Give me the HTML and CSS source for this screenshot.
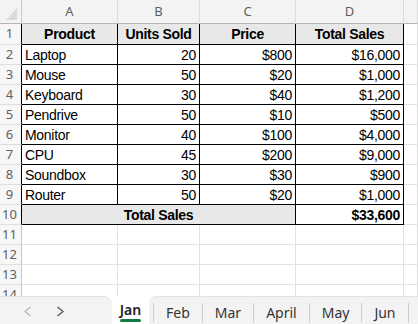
FILE: index.html
```html
<!DOCTYPE html>
<html lang="en">
<head>
  <meta charset="UTF-8" />
  <title>Sales - Jan</title>
  <link rel="stylesheet" href="styles.css">
</head>
<body>

  <div class="sheet">
    <div class="grid">
      <!-- column headers -->
      <div class="corner">
        <svg width="22" height="24" viewBox="0 0 22 24"><polygon points="6,20 17,20 17,8" fill="#dadada" /></svg>
      </div>
      <div class="col-head">A</div>
      <div class="col-head">B</div>
      <div class="col-head">C</div>
      <div class="col-head">D</div>
      <div class="col-head"></div>

      <!-- row 1 -->
      <div class="row-head in">1</div>
      <div class="cell tbl head">Product</div>
      <div class="cell tbl head">Units Sold</div>
      <div class="cell tbl head">Price</div>
      <div class="cell tbl head">Total Sales</div>
      <div class="cell"></div>

      <div class="row-head in">2</div>
      <div class="cell tbl">Laptop</div>
      <div class="cell tbl num">20</div>
      <div class="cell tbl num">$800</div>
      <div class="cell tbl num">$16,000</div>
      <div class="cell"></div>

      <div class="row-head in">3</div>
      <div class="cell tbl">Mouse</div>
      <div class="cell tbl num">50</div>
      <div class="cell tbl num">$20</div>
      <div class="cell tbl num">$1,000</div>
      <div class="cell"></div>

      <div class="row-head in">4</div>
      <div class="cell tbl">Keyboard</div>
      <div class="cell tbl num">30</div>
      <div class="cell tbl num">$40</div>
      <div class="cell tbl num">$1,200</div>
      <div class="cell"></div>

      <div class="row-head in">5</div>
      <div class="cell tbl">Pendrive</div>
      <div class="cell tbl num">50</div>
      <div class="cell tbl num">$10</div>
      <div class="cell tbl num">$500</div>
      <div class="cell"></div>

      <div class="row-head in">6</div>
      <div class="cell tbl">Monitor</div>
      <div class="cell tbl num">40</div>
      <div class="cell tbl num">$100</div>
      <div class="cell tbl num">$4,000</div>
      <div class="cell"></div>

      <div class="row-head in">7</div>
      <div class="cell tbl">CPU</div>
      <div class="cell tbl num">45</div>
      <div class="cell tbl num">$200</div>
      <div class="cell tbl num">$9,000</div>
      <div class="cell"></div>

      <div class="row-head in">8</div>
      <div class="cell tbl">Soundbox</div>
      <div class="cell tbl num">30</div>
      <div class="cell tbl num">$30</div>
      <div class="cell tbl num">$900</div>
      <div class="cell"></div>

      <div class="row-head in">9</div>
      <div class="cell tbl">Router</div>
      <div class="cell tbl num">50</div>
      <div class="cell tbl num">$20</div>
      <div class="cell tbl num">$1,000</div>
      <div class="cell"></div>

      <!-- total row, A:C merged -->
      <div class="row-head in">10</div>
      <div class="cell tbl head span3">Total Sales</div>
      <div class="cell tbl num bold">$33,600</div>
      <div class="cell"></div>

      <div class="row-head">11</div>
      <div class="cell"></div><div class="cell"></div><div class="cell"></div><div class="cell"></div><div class="cell"></div>
      <div class="row-head">12</div>
      <div class="cell"></div><div class="cell"></div><div class="cell"></div><div class="cell"></div><div class="cell"></div>
      <div class="row-head">13</div>
      <div class="cell"></div><div class="cell"></div><div class="cell"></div><div class="cell"></div><div class="cell"></div>
      <div class="row-head">14</div>
      <div class="cell"></div><div class="cell"></div><div class="cell"></div><div class="cell"></div><div class="cell"></div>
    </div>
  </div>

  <div class="tabbar">
    <div class="nav">
      <svg width="112" height="27" viewBox="0 0 112 27">
        <polyline points="30.5,10 25,14.5 30.5,19" fill="none" stroke="#b4b4b4" stroke-width="1.2" />
        <polyline points="57.5,10 63,14.5 57.5,19" fill="none" stroke="#505050" stroke-width="1.2" />
      </svg>
    </div>
    <div class="tab-active">
      <span>Jan</span>
      <i class="mark"></i>
    </div>
    <div class="tabs">
      <div class="tab">Feb</div>
      <div class="tab">Mar</div>
      <div class="tab">April</div>
      <div class="tab">May</div>
      <div class="tab">Jun</div>
    </div>
  </div>

</body>
</html>
```

FILE: styles.css
```css
body {
  margin: 0;
  width: 418px;
  height: 324px;
  overflow: hidden;
  background: #fff;
  font-family: "Liberation Sans", Arial, sans-serif;
  color: #000;
}

/* Sheet area (rows 11-14 run under the tab bar) */
.sheet {
  height: 296px;
  overflow: hidden;
}

.grid {
  display: grid;
  grid-template-columns: 22px 96px 82px 96px 108px 1fr;
  grid-template-rows: 24px 21px repeat(13, 20px);
}

.grid > div {
  box-sizing: border-box;
}

.corner {
  background: #f3f3f3;
  border-right: 1px solid #c8c8c8;
  border-bottom: 1px solid #b4b4b4;
}

.corner svg {
  display: block;
}

/* Column letters */
.col-head {
  background: #f3f3f3;
  border-right: 1px solid #dcdcdc;
  border-bottom: 1px solid #b4b4b4;
  font-family: "Noto Sans", "Open Sans", sans-serif;
  font-size: 13px;
  color: #5f5f5f;
  text-align: center;
  line-height: 23px;
}

/* Row numbers */
.row-head {
  background: #f7f7f7;
  border-right: 1px solid #c8c8c8;
  border-bottom: 1px solid #dedede;
  font-family: "Noto Sans", "Open Sans", sans-serif;
  font-size: 13px;
  color: #5f5f5f;
  text-align: center;
  line-height: 19px;
  padding-right: 2px;
}

.row-head.in {
  border-right-color: #000;
}

.cell {
  border-right: 1px solid #e1e1e1;
  border-bottom: 1px solid #e1e1e1;
  font-size: 14px;
  letter-spacing: -0.3px;
  line-height: 20px;
  padding: 0 3px;
  white-space: nowrap;
  overflow: hidden;
}

.cell.tbl {
  border-right-color: #000;
  border-bottom-color: #000;
}

.head {
  background: #e8e8e8;
  font-weight: bold;
  text-align: center;
}

.span3 {
  grid-column: span 3;
}

.num {
  text-align: right;
}

.bold {
  font-weight: bold;
}

/* Sheet tabs */
.tabbar {
  display: flex;
  height: 28px;
  font-family: "Noto Sans", "Open Sans", sans-serif;
  font-size: 14px;
  color: #333;
}

.nav {
  width: 112px;
  box-sizing: border-box;
  background: #f3f3f3;
  border-top: 1px solid #e2e2e2;
  border-top-right-radius: 8px;
}

.nav svg {
  display: block;
}

.tab-active {
  width: 37px;
  display: flex;
  flex-direction: column;
  align-items: center;
  padding-top: 5px;
  font-weight: 600;
  color: #222;
}

.tab-active span {
  line-height: 18px;
}

.mark {
  width: 21px;
  height: 3px;
  border-radius: 2px;
  background: #107c41;
}

.tabs {
  flex: 1;
  display: flex;
  align-items: flex-start;
  box-sizing: border-box;
  padding: 6px 0 0 4px;
  background: #f3f3f3;
  border-top: 1px solid #e2e2e2;
  border-top-left-radius: 8px;
}

.tab {
  height: 20px;
  line-height: 20px;
  padding: 0 12px;
  border-left: 1px solid #cfcfcf;
}

.tab:last-child {
  border-right: 1px solid #cfcfcf;
}
```
